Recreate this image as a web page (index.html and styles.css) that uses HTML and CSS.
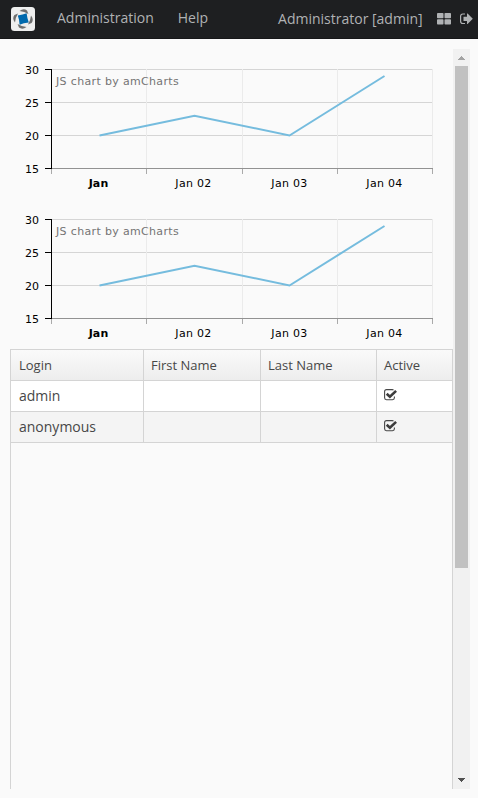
FILE: index.html
```html
<!DOCTYPE html>
<html lang="en">
<head>
<meta charset="utf-8">
<title>Administration</title>
<link rel="stylesheet" href="styles.css">
</head>
<body>
<header class="topbar">
  <svg class="logo" width="24" height="24" viewBox="0 0 24 24">
    <rect width="24" height="24" rx="3.5" fill="#eee"/>
    <g fill="#6e6e6e">
      <path d="M8.500 4Q12.500 .8 16 3.400L17.400 7Q13.500 4.500 8.500 4Z"/>
      <path d="M20 8.500Q23.200 12.500 20.600 16L17 17.400Q19.500 13.500 20 8.500Z"/>
      <path d="M15.500 20Q11.500 23.200 8 20.600L6.600 17Q10.500 19.500 15.500 20Z"/>
      <path d="M4 15.500Q.8 11.500 3.400 8L7 6.600Q4.500 10.500 4 15.500Z"/>
    </g>
    <path d="M6.800 8.400Q12 7.600 15.600 6.300Q16.200 11.500 17.800 15.600Q12.500 16 8.600 17.700Q8.200 12 6.800 8.400Z" fill="#0069ad"/>
  </svg>
  <nav class="menu"><a>Administration</a><a>Help</a></nav>
  <span class="user">Administrator [admin]</span>
  <svg class="windows" width="14" height="12" viewBox="0 0 14 12" fill="#b0b2b4"><rect width="6.500" height="5.300" rx=".8"/><rect x="7.500" width="6.500" height="5.300" rx=".8"/><rect y="6.200" width="6.500" height="5.300" rx=".8"/><rect x="7.500" y="6.200" width="6.500" height="5.300" rx=".8"/></svg>
  <svg class="logout" width="13" height="12" viewBox="0 0 13 12"><path d="M5 1H2.800Q.6 1 .6 3.200V8.300Q.6 10.500 2.800 10.500H5" fill="none" stroke="#b0b2b4" stroke-width="1.200"/><path d="M3.500 3.700H7V.8Q7 .3 7.600 .6L12.800 5.800L7.600 11Q7 11.300 7 10.800V7.900H3.500Z" fill="#b0b2b4"/></svg>
</header>
<main class="viewport">
  <div class="content">
    <svg class="chart" width="443" height="150" viewBox="10 49 443 150">
      <g id="plot">
        <path class="grid" d="M51 69.500H433M51 102.500H433M51 135.500H433"/>
        <path class="grid-v" d="M146.500 69V168M242.500 69V168M337.500 69V168M432.500 69V168"/>
        <path class="base" d="M51 168.500H433"/>
        <path class="ticks" d="M51.500 169V174M146.500 169V174M242.500 169V174M337.500 169V174M432.500 169V174"/>
        <path class="axis" d="M51.500 69V169M45 69.500H52M45 102.500H52M45 135.500H52M45 168.500H52"/>
        <path class="series" d="M99.500 135.500L194.500 115.700L289.500 135.500L384.500 76"/>
        <g class="values"><text x="39" y="74">30</text><text x="39" y="107">25</text><text x="39" y="140">20</text><text x="39" y="173">15</text></g>
        <g class="dates"><text class="strong" x="98.500" y="187">Jan</text><text x="193.500" y="187">Jan 02</text><text x="289.500" y="187">Jan 03</text><text x="384.500" y="187">Jan 04</text></g>
        <text class="credit" x="56" y="85">JS chart by amCharts</text>
      </g>
    </svg>
    <svg class="chart" width="443" height="150" viewBox="10 49 443 150"><use href="#plot"/></svg>
    <section class="table">
      <div class="row head"><span>Login</span><span>First Name</span><span>Last Name</span><span>Active</span></div>
      <div class="row"><span>admin</span><span></span><span></span><span><svg class="check" width="13" height="12" viewBox="0 0 13 12"><path d="M9.500 1.100Q9 .6 8.300 .6H2.500Q.6 .6 .6 2.500V8.800Q.6 10.700 2.500 10.700H8.500Q10.400 10.700 10.400 8.800V7.500" fill="none" stroke="#474747" stroke-width="1.100"/><path d="M2.700 4.800L5.900 7.800L12.100 1.900" fill="none" stroke="#3c3c3c" stroke-width="2.600"/></svg></span></div>
      <div class="row alt"><span>anonymous</span><span></span><span></span><span><svg class="check" width="13" height="12" viewBox="0 0 13 12"><path d="M9.500 1.100Q9 .6 8.300 .6H2.500Q.6 .6 .6 2.500V8.800Q.6 10.700 2.500 10.700H8.500Q10.400 10.700 10.400 8.800V7.500" fill="none" stroke="#474747" stroke-width="1.100"/><path d="M2.700 4.800L5.900 7.800L12.100 1.900" fill="none" stroke="#3c3c3c" stroke-width="2.600"/></svg></span></div>
    </section>
  </div>
  <div class="scrollbar">
    <svg width="17" height="17" viewBox="0 0 17 17" shape-rendering="crispEdges"><path d="M8 7h1v1h1v1h1v1h1v1H5v-1h1V9h1V8h1z" fill="#a3a3a3"/></svg>
    <div class="thumb"></div>
    <svg width="17" height="17" viewBox="0 0 17 17" shape-rendering="crispEdges"><path d="M5 6h7v1h-1v1h-1v1H9v1H8V9H7V8H6V7H5z" fill="#505050"/></svg>
  </div>
</main>
</body>
</html>
```
FILE: styles.css
```css
* { box-sizing: border-box; }
body { margin: 0; height: 798px; overflow: hidden; background: #fafafa; font-family: "Open Sans", sans-serif; font-size: 14px; color: #474747; }
.topbar { display: flex; align-items: center; height: 39px; padding: 0 5px 2px 11px; background: #1e1f21; border-bottom: 1px solid #171719; color: #b0b2b4; }
.logo { margin-top: 1px; }
.menu { display: flex; gap: 24px; margin-left: 22px; line-height: 20px; }
.user { margin-left: auto; line-height: 20px; margin-top: 1px; }
.windows { margin: 2px 0 0 14.4px; }
.logout { margin: 2px 0 0 9px; }
.viewport { display: flex; width: 460px; height: 740px; margin: 10px 0 0 10px; overflow: hidden; }
.content { display: flex; flex-direction: column; width: 443px; }
.chart { display: block; flex: none; font: 11px "DejaVu Sans", sans-serif; }
.grid, .grid-v, .base, .ticks, .axis, .series { fill: none; }
.grid { stroke: #d5d5d5; }
.grid-v { stroke: #ebebeb; }
.base { stroke: #929292; }
.ticks { stroke: #aaa; }
.axis { stroke: #000; }
.series { stroke: #75bcde; stroke-width: 2; }
.values { text-anchor: end; }
.dates { text-anchor: middle; letter-spacing: 0.3px; }
.strong { font-weight: bold; letter-spacing: 0.1px; }
.chart text { fill: #000; }
.chart .credit { fill: #747474; letter-spacing: 0.34px; }
.table { flex: 1; border: 1px solid #d4d4d4; border-bottom: 0; }
.row { display: grid; grid-template-columns: 133px 117px 116px 75px; height: 31px; border-bottom: 1px solid #d4d4d4; background: #fff; line-height: 30px; }
.row span { padding-left: 8px; border-right: 1px solid #d4d4d4; }
.row span + span { padding-left: 7px; }
.row span:last-child { border-right: 0; }
.head { background: linear-gradient(#fafafa, #ededed); font-size: 13px; }
.alt { background: #f4f4f4; }
.check { display: block; margin-top: 8px; }
.scrollbar { display: flex; flex-direction: column; width: 17px; background: #f1f1f1; }
.scrollbar svg { display: block; }
.thumb { width: 13px; height: 502px; margin: 0 2px auto; background: #c1c1c1; }
```
